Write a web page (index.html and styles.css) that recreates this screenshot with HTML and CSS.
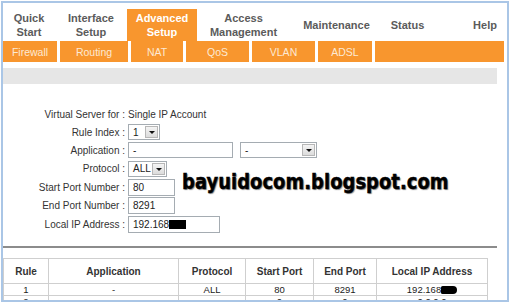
FILE: index.html
```html
<!DOCTYPE html>
<html>
<head>
<meta charset="utf-8">
<link rel="stylesheet" href="styles.css">
</head>
<body>
<div class="frame">
  <div class="nav">
    <div class="tab w-quick">Quick<br>Start</div>
    <div class="tab w-iface">Interface<br>Setup</div>
    <div class="tab w-adv active">Advanced<br>Setup</div>
    <div class="tab w-access">Access<br>Management</div>
    <div class="tab w-maint">Maintenance</div>
    <div class="tab w-status">Status</div>
    <div class="tab w-help">Help</div>
  </div>
  <div class="subnav">
    <div class="sub s-fw">Firewall</div>
    <div class="sub sep s-rt">Routing</div>
    <div class="sub sep s-nat">NAT</div>
    <div class="sub sep s-qos">QoS</div>
    <div class="sub sep s-vlan">VLAN</div>
    <div class="sub sep s-adsl">ADSL</div>
    <div class="sub sep s-rest"></div>
  </div>
  <div class="graybar"></div>

  <div class="form">
    <div class="lbl">Virtual Server for :</div>
    <div class="val">Single IP Account</div>

    <div class="lbl">Rule Index :</div>
    <div class="val"><span class="select sel-rule"><span class="txt">1</span><span class="btn"></span></span></div>

    <div class="lbl">Application :</div>
    <div class="val"><span class="input in-app">-</span><span class="select sel-app"><span class="txt">-</span><span class="btn"></span></span></div>

    <div class="lbl">Protocol :</div>
    <div class="val"><span class="select sel-proto"><span class="txt">ALL</span><span class="btn"></span></span></div>

    <div class="lbl">Start Port Number :</div>
    <div class="val"><span class="input in-port">80</span></div>

    <div class="lbl">End Port Number :</div>
    <div class="val"><span class="input in-port">8291</span></div>

    <div class="lbl">Local IP Address :</div>
    <div class="val"><span class="input in-ip">192.168<span class="redact"></span></span></div>
  </div>

  <div class="rule-line"></div>

  <table class="grid">
    <tr class="head">
      <th class="c-rule">Rule</th>
      <th class="c-app">Application</th>
      <th class="c-proto">Protocol</th>
      <th class="c-sp">Start Port</th>
      <th class="c-ep">End Port</th>
      <th class="c-ip">Local IP Address</th>
    </tr>
    <tr>
      <td>1</td><td>-</td><td>ALL</td><td>80</td><td>8291</td><td>192.168<span class="blob"></span></td>
    </tr>
    <tr>
      <td>2</td><td>-</td><td>-</td><td>0</td><td>0</td><td>0.0.0.0</td>
    </tr>
  </table>

  <div class="watermark">bayuidocom.blogspot.com</div>
</div>
</body>
</html>
```

FILE: styles.css
```css
html, body {
  margin: 0;
  padding: 0;
  background: #fff;
}
body {
  font-family: "Liberation Sans", Arial, sans-serif;
  width: 511px;
  height: 304px;
  overflow: hidden;
}
.frame {
  position: relative;
  box-sizing: border-box;
  margin: 1px 0 0 1px;
  width: 508px;
  height: 301px;
  border: 2px solid #aac6e6;
  overflow: hidden;
}

/* top nav */
.nav {
  display: flex;
  align-items: flex-end;
  height: 38px;
}
.tab {
  height: 32px;
  display: flex;
  align-items: center;
  justify-content: center;
  text-align: center;
  font-weight: bold;
  font-size: 11px;
  line-height: 14px;
  color: #5b5b5b;
}
.tab.active {
  background: #f8962e;
  color: #fff;
}
.w-quick { width: 52px; }
.w-iface { width: 72px; }
.w-adv { width: 70px; }
.w-access { width: 93px; }
.w-maint { width: 93px; }
.w-status { width: 49px; }
.w-help { width: 40px; margin-left: auto; margin-right: 2px; }

/* sub nav */
.subnav {
  display: flex;
  height: 21px;
  margin-right: 3px;
}
.sub {
  background: #f8962e;
  color: #fde9d3;
  font-size: 10.5px;
  display: flex;
  align-items: center;
  justify-content: center;
}
.sub.sep { border-left: 3px solid #fff; }
.s-fw { width: 54px; }
.s-rt { width: 68px; }
.s-nat { width: 52px; }
.s-qos { width: 63px; }
.s-vlan { width: 63px; }
.s-adsl { width: 54px; }
.s-rest { flex: 1; }

.graybar {
  height: 16px;
  background: #e6e6e6;
  margin: 6px 10px 0 0;
}

/* form */
.form {
  display: grid;
  grid-template-columns: 122px auto;
  column-gap: 3px;
  grid-template-rows: 17px 18px 18px 19px 18px 19px 19px;
  align-items: center;
  margin-top: 22px;
  font-size: 10px;
  color: #333;
}
.lbl { text-align: right; white-space: nowrap; }
.val { display: flex; align-items: center; gap: 3px; white-space: nowrap; }

.input, .select {
  box-sizing: border-box;
  display: inline-flex;
  align-items: center;
  border: 1px solid #a5acb2;
  background: #fff;
  font-size: 10px;
  color: #222;
  padding-left: 4px;
}
.select { justify-content: space-between; padding-right: 1px; height: 16px; }
.select .btn {
  width: 13px;
  height: 12px;
  box-sizing: border-box;
  border: 1px solid #b7b7b7;
  background: linear-gradient(#f4f4f4, #dcdcdc);
  position: relative;
}
.select .btn::after {
  content: "";
  position: absolute;
  left: 3px;
  top: 4px;
  border-left: 3px solid transparent;
  border-right: 3px solid transparent;
  border-top: 3px solid #111;
}
.sel-rule { width: 32px; }
.sel-proto { width: 39px; }
.sel-app { width: 77px; margin-left: 4px; }
.in-app { width: 105px; height: 16px; }
.in-port { width: 47px; height: 17px; }
.in-ip { width: 92px; height: 17px; }
.redact {
  display: inline-block;
  width: 17px;
  height: 9px;
  background: #000;
}

.rule-line {
  height: 2px;
  background: #8c8c8c;
  margin: 12px 10px 0 0;
}

/* table */
.grid {
  margin-top: 10px;
  border-collapse: collapse;
  width: 485px;
  font-size: 9.5px;
  color: #222;
}
.grid th, .grid td {
  border: 1px solid #cfcfcf;
  text-align: center;
  padding: 0;
}
.grid th {
  height: 24px;
  font-weight: bold;
  font-size: 10px;
  color: #333;
}
.grid td { height: 11px; line-height: 11px; }
.c-rule { width: 44px; }
.c-app { width: 129px; }
.c-proto { width: 66px; }
.c-sp { width: 67px; }
.c-ep { width: 62px; }
.blob {
  display: inline-block;
  width: 16px;
  height: 8px;
  background: #000;
  border-radius: 2px 5px 5px 2px;
  vertical-align: middle;
}

.watermark {
  position: absolute;
  left: 179px;
  top: 166px;
  font-family: "DejaVu Sans", sans-serif;
  font-weight: bold;
  font-size: 18px;
  color: #000;
  -webkit-text-stroke: 0.4px #000;
  transform: scaleY(1.15);
  transform-origin: left top;
  text-shadow: 1px 1px 1px #888;
}
```
